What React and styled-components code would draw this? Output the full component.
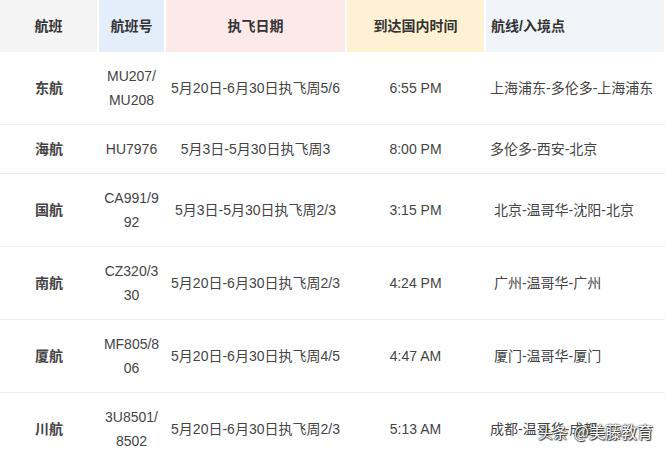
import React from 'react';
import styled, { createGlobalStyle } from 'styled-components';

const GlobalStyle = createGlobalStyle`
html, body {
  margin: 0;
  padding: 0;
  background: #fff;
  overflow: hidden;
}
body {
  font-family: "Liberation Sans", "Noto Sans CJK SC", sans-serif;
}
`;

const Page = styled.div`
position: relative;
width: 665px;
height: 455px;
overflow: hidden;
`;

const Table = styled.table`
width: 665px;
table-layout: fixed;
border-collapse: collapse;
font-size: 14px;
line-height: 24px;
`;

const Head = styled.th`
background: ${p => p.bg};
color: #333;
font-weight: bold;
height: 52px;
padding: 0 5px;
text-align: ${p => (p.left ? 'left' : 'center')};
border-right: 2px solid #fff;
box-sizing: border-box;
`;

const Row = styled.tr`
border-bottom: 1px solid #ededed;
`;

const Cell = styled.td`
padding: 12px 5px;
color: #444;
font-weight: ${p => (p.bold ? 'bold' : 'normal')};
text-align: ${p => (p.left ? 'left' : 'center')};
word-break: break-all;
vertical-align: middle;
`;

const Watermark = styled.div`
position: absolute;
right: 12px;
bottom: 12px;
display: flex;
align-items: baseline;
gap: 6px;
color: #fff;
font-family: "Noto Sans CJK SC", sans-serif;
text-shadow: 0 0 2px #222, 0 0 1px #222, 1px 1px 1px #333;
`;

const MarkSmall = styled.span`
font-size: 15px;
`;

const MarkBig = styled.span`
font-size: 16px;
`;

const heads = [
  { label: '航班', bg: '#f4f4f4', w: 98 },
  { label: '航班号', bg: '#e4eefb', w: 67 },
  { label: '执飞日期', bg: '#fde9ea', w: 181 },
  { label: '到达国内时间', bg: '#fff2d4', w: 139 },
  { label: '航线/入境点', bg: '#f1f4f9', w: 180, left: true },
];

const flights = [
  ['东航', 'MU207/MU208', '5月20日-6月30日执飞周5/6', '6:55 PM', '上海浦东-多伦多-上海浦东'],
  ['海航', 'HU7976', '5月3日-5月30日执飞周3', '8:00 PM', '多伦多-西安-北京'],
  ['国航', 'CA991/992', '5月3日-5月30日执飞周2/3', '3:15 PM', '\u00a0北京-温哥华-沈阳-北京'],
  ['南航', 'CZ320/330', '5月20日-6月30日执飞周2/3', '4:24 PM', '\u00a0广州-温哥华-广州'],
  ['厦航', 'MF805/806', '5月20日-6月30日执飞周4/5', '4:47 AM', '\u00a0厦门-温哥华-厦门'],
  ['川航', '3U8501/8502', '5月20日-6月30日执飞周2/3', '5:13 AM', '成都-温哥华-成都'],
];

const App = () => {
  return (
    <Page>
      <GlobalStyle />
      <Table>
        <colgroup>
          {heads.map(h => <col key={h.label} style={{ width: h.w }} />)}
        </colgroup>
        <thead>
          <tr>
            {heads.map(h => (
              <Head key={h.label} bg={h.bg} left={h.left}>{h.label}</Head>
            ))}
          </tr>
        </thead>
        <tbody>
          {flights.map(f => (
            <Row key={f[0]}>
              <Cell bold>{f[0]}</Cell>
              <Cell>{f[1]}</Cell>
              <Cell>{f[2]}</Cell>
              <Cell>{f[3]}</Cell>
              <Cell left>{f[4]}</Cell>
            </Row>
          ))}
        </tbody>
      </Table>
      <Watermark>
        <MarkSmall>头条</MarkSmall>
        <MarkBig>@美藤教育</MarkBig>
      </Watermark>
    </Page>
  );
};

export default App;
